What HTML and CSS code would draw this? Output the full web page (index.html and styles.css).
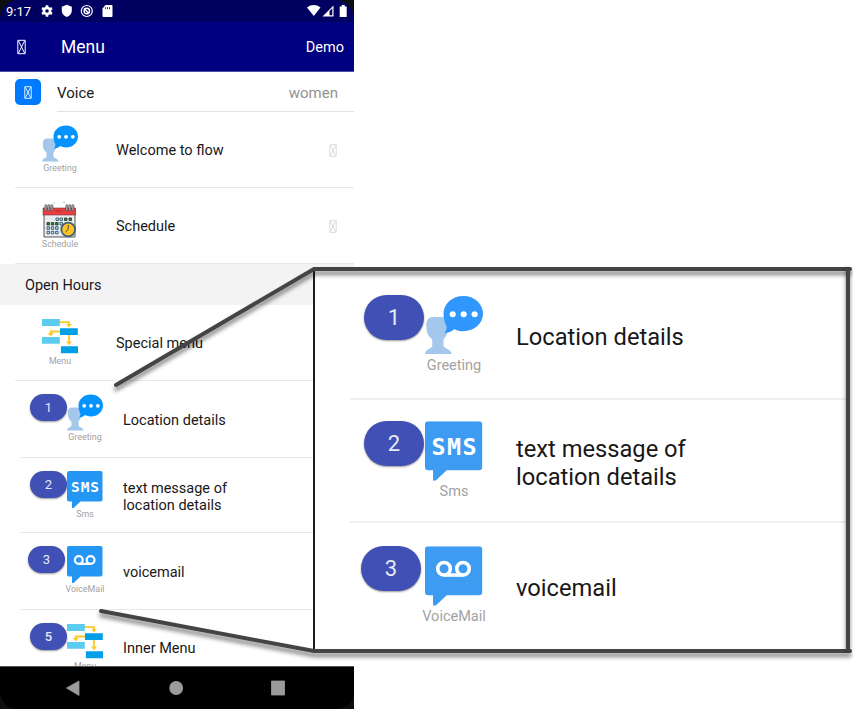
FILE: index.html
```html
<!DOCTYPE html>
<html lang="en">
<head>
<meta charset="utf-8">
<title>Menu</title>
<link rel="stylesheet" href="styles.css">
</head>
<body>
<svg class="defs" aria-hidden="true">
  <symbol id="missing" viewBox="0 0 9 15"><path d="M.8.8h7.4v13.4H.8zM1.5 1.5l6 12M7.5 1.5l-6 12" fill="none" stroke="currentColor"/></symbol>
  <symbol id="greeting" viewBox="0 0 36 36">
    <path d="M5 13h5c3 0 4.200 2 4.200 6 0 4.500-1 6-2.700 8v4c0 1.500 5 2 5 5H0c0-3 4.500-3.500 4.500-5v-4C2 25 .8 23 .8 18 .8 15 2 13 5 13z" fill="#a4c8ec"/>
    <path d="M23.800 0C30.600 0 36 4.800 36 10.900s-5.400 11-12.200 11c-2.500 0-4-.5-5.700-1.300-1.500 1.500-3.600 2.300-6.100 2.300 1.100-1.100 1.600-2.700 1.300-4.300-1.200-2-1.800-4.800-1.800-7.700C11.500 4.800 17 0 23.800 0z" fill="var(--bubble)"/>
    <g fill="#fff"><circle cx="17.200" cy="11.300" r="1.900"/><circle cx="24" cy="11.300" r="1.900"/><circle cx="30.800" cy="11.300" r="1.900"/></g>
  </symbol>
  <symbol id="menu" viewBox="0 0 36 36">
    <g fill="none" stroke="#fdc92c" stroke-width="1.900"><path d="M17 3.600h10v3.500M19 13H8.700v3M27 16v8"/></g>
    <path d="M24 5.500h6l-3 3.500zM5.700 14.500h6l-3 3.500zM24 23h6l-3 3.800z" fill="#fdc92c"/>
    <path d="M0 .5h17.800v7H0zM0 18.500h17.800v6.700H0z" fill="#5bcbf0"/>
    <path d="M18 9.800h17.800v6.700H18zM18.900 27.700H36v7H18.900z" fill="#039fe6"/>
  </symbol>
  <symbol id="message" viewBox="0 0 36 37">
    <path d="M2 0h31.500a2 2 0 0 1 2 2v26.500a2 2 0 0 1-2 2H13.500L6.500 37H5v-6.500H2a2 2 0 0 1-2-2V2a2 2 0 0 1 2-2z" fill="var(--message)"/>
  </symbol>
  <symbol id="voicemail" viewBox="0 0 36 37">
    <use href="#message"/>
    <g fill="none" stroke="#fff" stroke-width="2.200"><circle cx="11.800" cy="14" r="3.900"/><circle cx="23.600" cy="14" r="3.900"/><path d="M11.800 17.900h11.800"/></g>
  </symbol>
  <symbol id="calendar" viewBox="0 0 36 36">
    <path d="M2 7h31v28.500H2z" fill="#e9edf0" stroke="#57545a"/>
    <path d="M1 6.500h32.500V13.500H1z" fill="#e5403f" stroke="#77343a" stroke-width=".6"/>
    <path d="M13.500 9.500h7" stroke="#a92b32"/>
    <g fill="#ddd" stroke="#4b4b50" stroke-width=".9"><rect x="3" y="3.200" width="1.800" height="6" rx=".9"/><rect x="6" y="3.200" width="1.800" height="6" rx=".9"/><rect x="9" y="3.200" width="1.800" height="6" rx=".9"/><rect x="24" y="3.200" width="1.800" height="6" rx=".9"/><rect x="27" y="3.200" width="1.800" height="6" rx=".9"/><rect x="30" y="3.200" width="1.800" height="6" rx=".9"/></g>
    <g fill="#c4e2ee" stroke="#34566b" stroke-width=".9"><path d="M14 16.500h2.500V19H14zM18 16.500h2.500V19H18zM18 21h2.500v2.500H18zM5 25.300h2.500v2.500H5zM9.300 25.300h2.500v2.500H9.300zM13.600 25.300h2.500v2.500h-2.500zM5 29.800h2.500v2.500H5zM9.300 29.800h2.500v2.500H9.300zM13.600 29.800h2.500v2.500h-2.500z"/></g>
    <g fill="#397e45" stroke="#294333" stroke-width=".9"><path d="M22.500 16.500H25V19h-2.500zM27 16.500h2.500V19H27zM5 21h2.500v2.500H5zM9.300 21h2.500v2.500H9.300zM13.600 21h2.500v2.500h-2.500z"/></g>
    <circle cx="26.200" cy="28" r="6.900" fill="#fdc32b" stroke="#3c6274" stroke-width="1.800"/>
    <path d="M26.200 23.500V28L23.500 30.500" fill="none" stroke="#514533"/>
    <path d="M11.500.7h1.200v1.200h-1.200z" fill="#73c78a"/><path d="M21.500 0h1.200v1.200h-1.200z" fill="#63b4df"/>
  </symbol>
</svg>

<main class="phone">
  <div class="status">
    <span class="clock">9:17</span>
    <svg class="status-left" viewBox="0 0 74 14" fill="#fff">
      <g transform="translate(0 1)"><circle cx="6" cy="6" r="3.100" fill="none" stroke="#fff" stroke-width="2.600"/><path d="M6 .2v2M6 9.800v2M1 3.100l1.800 1M9.200 7.900l1.800 1M1 8.900l1.800-1M9.200 4.100l1.800-1" stroke="#fff" stroke-width="2.600"/></g>
      <path d="M25.800.8l5 2v4c0 3-2 5-5 6.200-3-1.200-5-3.200-5-6.200v-4z"/>
      <circle cx="45.800" cy="7" r="5.500" fill="none" stroke="#fff" stroke-width="1.200"/><circle cx="45.800" cy="7" r="2.700" fill="none" stroke="#fff" stroke-width="1.400"/><path d="M43 4.500l5 5" stroke="#fff" stroke-width="1.400"/>
      <path d="M64.500 1h6a1 1 0 0 1 1 1v10a1 1 0 0 1-1 1h-8a1 1 0 0 1-1-1V4.500z"/><path d="M64.500 3.200v2M66.500 3.200v2M68.500 3.200v2" stroke="#000061" stroke-width=".8"/>
    </svg>
    <svg class="status-right" viewBox="0 0 41 14" fill="#fff">
      <path d="M0 3.500c4-3.300 9.500-3.300 13.500 0L6.800 12z"/>
      <path d="M15.500 12.500L26.500 1.500v11z"/><path d="M22.500 7l2.800-2.800v7h-2.800z" fill="#000061"/>
      <path d="M32.700 2.500h2V1h3v1.500h2V13h-7z"/>
    </svg>
  </div>
  <header class="appbar">
    <svg class="appbar-icon"><use href="#missing"/></svg>
    <h1>Menu</h1>
    <span class="demo">Demo</span>
  </header>
  <section class="voice">
    <span class="tile"><svg><use href="#missing"/></svg></span>
    <div class="voice-body"><span>Voice</span><span class="value">women</span></div>
  </section>
  <section>
    <div class="row">
      <figure><svg><use href="#greeting"/></svg><figcaption>Greeting</figcaption></figure>
      <span class="title">Welcome to flow</span>
      <svg class="chevron"><use href="#missing"/></svg>
    </div>
    <div class="row">
      <figure><svg><use href="#calendar"/></svg><figcaption>Schedule</figcaption></figure>
      <span class="title">Schedule</span>
      <svg class="chevron"><use href="#missing"/></svg>
    </div>
  </section>
  <h2>Open Hours</h2>
  <section>
    <div class="row">
      <figure><svg><use href="#menu"/></svg><figcaption>Menu</figcaption></figure>
      <span class="title">Special menu</span>
    </div>
    <div class="row step">
      <b class="badge">1</b>
      <figure><svg><use href="#greeting"/></svg><figcaption>Greeting</figcaption></figure>
      <span class="title">Location details</span>
    </div>
    <div class="row step short">
      <b class="badge">2</b>
      <figure><svg viewBox="0 0 36 37"><use href="#message"/><text x="4" y="20.700" textLength="28" class="sms-text">SMS</text></svg><figcaption>Sms</figcaption></figure>
      <span class="title">text message of<br>location details</span>
    </div>
    <div class="row step">
      <b class="badge early">3</b>
      <figure><svg><use href="#voicemail"/></svg><figcaption>VoiceMail</figcaption></figure>
      <span class="title">voicemail</span>
    </div>
    <div class="row step last">
      <b class="badge strong">5</b>
      <figure><svg><use href="#menu"/></svg><figcaption>Menu</figcaption></figure>
      <span class="title">Inner Menu</span>
    </div>
  </section>
  <nav>
    <svg viewBox="0 0 354 43" fill="#9b9b9b"><path d="M66.500 21L79 14v14.500zM271.500 14h13v14h-13z" stroke="#9b9b9b" stroke-width=".8" stroke-linejoin="round"/><circle cx="176.200" cy="21" r="6.900"/></svg>
  </nav>
  <svg class="corner" viewBox="0 0 354 709" fill="#0d0d0d"><path d="M0 0h16C7 1 1 8 0 18zM354 0h-16c9 1 15 8 16 18z"/><path d="M0 709h17C7 708 1 702 0 692zM354 709h-17c10-1 16-7 17-17z"/></svg>
</main>

<aside class="callout">
  <div class="zrow">
    <b class="badge">1</b>
    <figure><svg><use href="#greeting"/></svg><figcaption>Greeting</figcaption></figure>
    <span class="title">Location details</span>
  </div>
  <div class="zrow middle">
    <b class="badge">2</b>
    <figure><svg viewBox="0 0 36 37"><use href="#message"/><text x="4" y="20.700" textLength="28" class="sms-text">SMS</text></svg><figcaption>Sms</figcaption></figure>
    <span class="title">text message of<br>location details</span>
  </div>
  <div class="zrow final">
    <b class="badge early">3</b>
    <figure><svg><use href="#voicemail"/></svg><figcaption>VoiceMail</figcaption></figure>
    <span class="title">voicemail</span>
  </div>
</aside>
<svg class="frame" viewBox="0 0 853 709">
  <path d="M314 270v380" stroke="#1c1d20" stroke-width="2"/>
  <g class="frame-lines"><path d="M116 385L314 269H850M101 611L314 651H850"/></g>
  <path class="frame-side" d="M848 269V651"/>
</svg>
</body>
</html>
```
FILE: styles.css
```css
* { box-sizing: border-box; }
body {
  --bubble: #0593ff;
  --message: #2496f3;
  margin: 0;
  width: 853px;
  height: 709px;
  overflow: hidden;
  position: relative;
  background: #fff;
  color: #181818;
  font-family: Roboto, sans-serif;
  font-size: 14.500px;
}
svg { display: block; }
h1, h2, figure { margin: 0; font-weight: 400; }
.defs { position: absolute; width: 0; height: 0; }
.sms-text { font: bold 14.500px "DejaVu Sans Mono", monospace; fill: #fff; }

.phone {
  position: relative;
  display: flex;
  flex-direction: column;
  width: 354px;
  height: 709px;
  overflow: hidden;
}
.phone > * { flex: none; }
.status {
  display: flex;
  align-items: center;
  height: 22px;
  padding: 0 6px;
  background: #000061;
  color: #fff;
  font-size: 13px;
}
.clock { width: 35px; }
.status-left { width: 74px; height: 14px; }
.status-right { width: 41px; height: 14px; margin-left: auto; }
.appbar {
  display: flex;
  align-items: center;
  height: 50px;
  padding: 1px 10px 0 17px;
  background: #000080;
  border-bottom: 1px solid #4d4da5;
  color: #fff;
}
.appbar-icon { width: 9px; height: 16px; margin-right: 35px; }
h1 { font-size: 17.500px; }
.demo { margin-left: auto; font-size: 14.500px; }
.voice { display: flex; height: 40px; padding-left: 15px; }
.tile {
  display: grid;
  place-items: center;
  width: 26px;
  height: 26px;
  margin: 7px 16px 0 0;
  border-radius: 5px;
  background: #007aff;
  color: #fff;
}
.tile svg { width: 8px; height: 13px; }
.voice-body {
  flex: 1;
  display: flex;
  align-items: center;
  justify-content: space-between;
  padding: 2px 16px 0 0;
  border-bottom: 1px solid #e2e2e2;
  font-size: 15px;
}
.value { color: #929292; }

.row {
  display: flex;
  height: 76px;
  margin-left: 15px;
  padding: 13px 16px 0 27px;
  border-bottom: 1px solid #e8e8e8;
}
.row figure { flex: none; width: 36px; }
.row figure svg { width: 36px; height: 37px; }
figcaption {
  display: flex;
  justify-content: center;
  font-size: 8.900px;
  line-height: 12px;
  color: #a2a2a2;
  white-space: nowrap;
}
.title { line-height: 17px; }
.row .title { align-self: center; margin: -11px 0 0 38px; }
.chevron { width: 8px; height: 13px; margin: 19px 1px 0 auto; color: #d5d5d5; }
h2 {
  height: 41px;
  padding: 1px 0 0 25px;
  background: #f3f3f3;
  font-size: 14.500px;
  line-height: 41px;
}
.row.step { height: 77px; margin-left: 21px; padding-left: 9px; }
.row.step.short { height: 75px; }
.row.step.last { height: 56px; border: 0; overflow: hidden; }
.row.step .title { margin-left: 20px; }
.row.step.short .title { margin-top: -9px; }
.row.step.last .title { align-self: flex-start; margin-top: 17px; }
.badge {
  display: grid;
  place-items: center;
  flex: none;
  width: 37px;
  height: 27px;
  border-radius: 14px;
  background: #4050b5;
  box-shadow: 0 1px 2px rgba(0, 0, 0, .4);
  color: #e7e9f7;
  font-size: 13px;
  font-weight: 400;
}
.badge.early { margin-left: -2px; margin-right: 2px; }
.badge.strong { font-weight: 500; }
nav {
  width: 354px;
  height: 43px;
  margin-top: auto;
  background: #000;
  border-top: 1px solid #555;
}
.corner { position: absolute; inset: 0; width: 354px; height: 709px; }

.callout {
  --bubble: #3097ff;
  --message: #3e9bf2;
  position: absolute;
  left: 314px;
  top: 269px;
  width: 534px;
  height: 382px;
  background: #fff;
}
.zrow {
  display: flex;
  height: 131px;
  margin-left: 36px;
  padding: 26px 0 0 14px;
  border-bottom: 2px solid #efefef;
}
.zrow.middle { height: 122.500px; padding-top: 21px; }
.zrow.final { border: 0; height: 128px; padding-top: 23.500px; }
.zrow figure { width: 58px; flex: none; }
.zrow figure svg { width: 58px; height: 60px; }
.zrow figcaption { font-size: 14.500px; line-height: 22px; }
.zrow .title { margin: 28px 0 0 33px; font-size: 23.700px; line-height: 28px; }
.zrow.middle .title { margin-top: 14px; }
.zrow .badge { width: 60px; height: 45px; margin-right: 1px; border-radius: 23px; font-size: 22px; }
.zrow .badge.early { margin-left: -3px; margin-right: 4px; }

.frame { position: absolute; left: 0; top: 0; width: 853px; height: 709px; }
.frame-lines { fill: none; stroke: #444; stroke-width: 4; stroke-linecap: round; filter: drop-shadow(0 4px 2px rgba(0, 0, 0, .5)); }
.frame-side { stroke: #444; stroke-width: 4; filter: drop-shadow(0 0 2px rgba(0, 0, 0, .5)); }
```
